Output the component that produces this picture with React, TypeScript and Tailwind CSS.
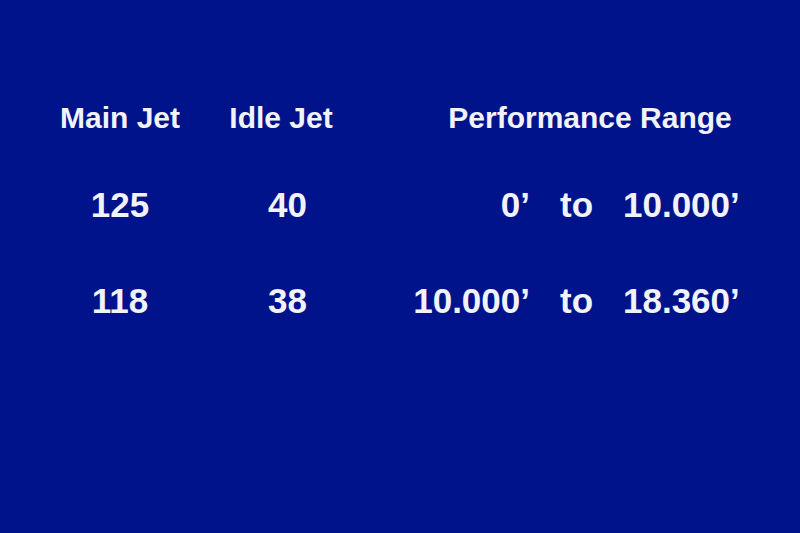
const rows = [
  { main: '125', idle: '40', from: '0’', to: '10.000’' },
  { main: '118', idle: '38', from: '10.000’', to: '18.360’' },
];

const App = () => {
  return (
    <div
      className="h-[533px] w-[800px] overflow-hidden whitespace-nowrap bg-[#00138a] pt-[103px] font-bold text-[#f2f2fa]"
      style={{ fontFamily: '"Liberation Sans", Arial, sans-serif' }}
    >
      <div className="flex h-[30px] text-[30px] leading-[30px]">
        <div className="flex w-[240px] justify-center">Main Jet</div>
        <div className="flex w-[82px] justify-center">Idle Jet</div>
        <div className="flex w-[478px] justify-center pl-[58px]">
          Performance Range
        </div>
      </div>

      <div className="mt-[55px] flex flex-col gap-[62px] text-[35px] leading-[34px]">
        {rows.map((row) => (
          <div key={row.main} className="flex h-[34px]">
            <div className="flex w-[240px] justify-center">{row.main}</div>
            <div className="flex w-[95px] justify-center">{row.idle}</div>
            <div className="flex w-[195px] justify-end">{row.from}</div>
            <div className="ml-[30px] w-[33px]">to</div>
            <div className="ml-[30px]">{row.to}</div>
          </div>
        ))}
      </div>
    </div>
  );
};

export default App;
